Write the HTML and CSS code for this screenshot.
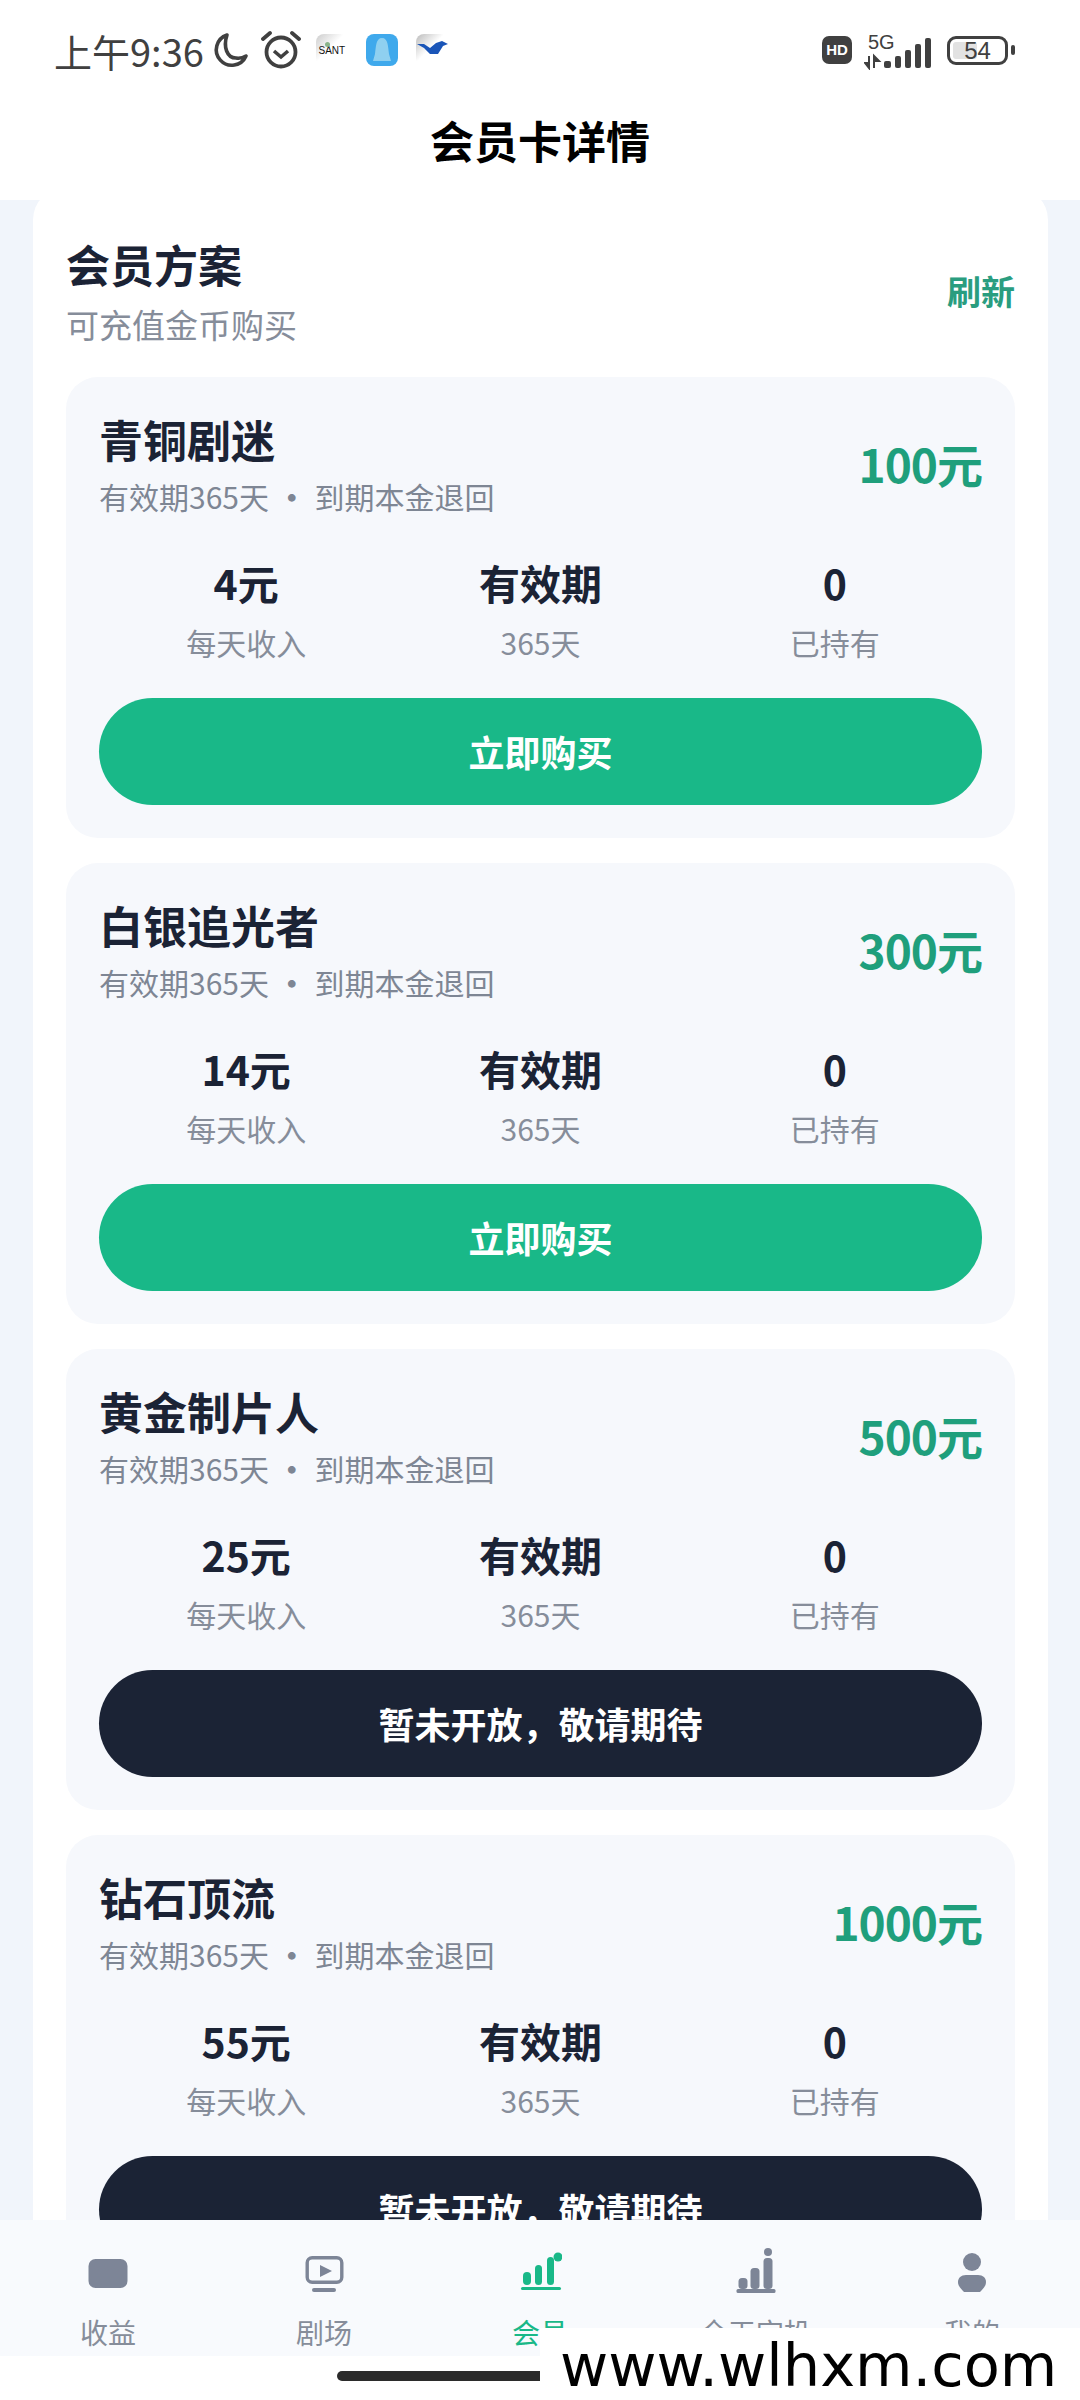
FILE: index.html
```html
<!DOCTYPE html>
<html lang="zh">
  <head>
    <meta charset="UTF-8" />
    <meta name="viewport" content="width=device-width, initial-scale=1.0" />
    <title>会员卡详情</title>
    <link rel="stylesheet" href="styles.css">
  </head>

  <body>
    <div class="page">
      <header class="top">
        <div class="status">
          <div class="status-left">
            <span class="clock">上午9:36</span>
            <svg class="ic-moon" width="38" height="38" viewBox="0 0 38 38">
              <path d="M15 4 A15.5 15.5 0 1 0 34 25 A15 15 0 0 1 24 27 C15 27 11 16 15 4 Z" fill="none" stroke="#404040" stroke-width="3.6" stroke-linejoin="round" />
            </svg>
            <svg class="ic-alarm" width="40" height="40" viewBox="0 0 40 40">
              <circle cx="20" cy="22" r="14.5" fill="none" stroke="#404040" stroke-width="3.8" />
              <path d="M13 21 L20 27 L27 21" fill="none" stroke="#404040" stroke-width="3.6" />
              <path d="M2 9 L9 3 M38 9 L31 3" stroke="#404040" stroke-width="3.8" stroke-linecap="round" />
            </svg>
            <span class="app app-sant"><i class="sant-dot"></i>SANT</span>
            <span class="app app-blue">
              <svg width="32" height="32" viewBox="0 0 32 32">
                <path d="M16 4 C10 4 10 12 9 20 L7 27 L25 27 L23 20 C22 12 22 4 16 4 Z" fill="#8fd0f0" />
              </svg>
            </span>
            <span class="app app-bird">
              <svg width="32" height="32" viewBox="0 0 32 32">
                <path d="M1 10 L8 10 L14 14 L20 9 L26 7 L32 10 L27 12 L22 20 L14 20 L8 14 Z" fill="#1a55b8" />
              </svg>
            </span>
          </div>
          <div class="status-right">
            <span class="hd">HD</span>
            <svg class="net" width="68" height="40" viewBox="0 -4 68 40">
              <text x="4" y="15" class="net-label">5G</text>
              <path d="M5 22 V34 L1 29 H5 Z M10 34 V22 L15 27 H10 Z" fill="#404040" stroke="#404040" stroke-width="2" />
              <rect x="20" y="27" width="7" height="7" rx="2" fill="#404040" />
              <rect x="31" y="22" width="6" height="12" rx="2" fill="#404040" />
              <rect x="41" y="16" width="6" height="18" rx="2" fill="#404040" />
              <rect x="51" y="10" width="6" height="24" rx="2" fill="#404040" />
              <rect x="61" y="4" width="6" height="30" rx="2" fill="#404040" />
            </svg>
            <span class="battery"><span class="battery-fill"></span><span class="battery-num">54</span></span>
            <span class="battery-tip"></span>
          </div>
        </div>
        <h1 class="title">会员卡详情</h1>
      </header>

      <main class="panel">
        <div class="panel-head">
          <div>
            <h2 class="panel-title">会员方案</h2>
            <p class="panel-sub">可充值金币购买</p>
          </div>
          <span class="refresh">刷新</span>
        </div>

        <section class="card">
          <div class="card-head">
            <div>
              <h3 class="card-name">青铜剧迷</h3>
              <p class="card-sub">有效期365天 <span class="dot">·</span> 到期本金退回</p>
            </div>
            <span class="price">100元</span>
          </div>
          <div class="stats">
            <div class="stat"><b>4元</b><span>每天收入</span></div>
            <div class="stat"><b>有效期</b><span>365天</span></div>
            <div class="stat"><b>0</b><span>已持有</span></div>
          </div>
          <div class="btn">立即购买</div>
        </section>

        <section class="card">
          <div class="card-head">
            <div>
              <h3 class="card-name">白银追光者</h3>
              <p class="card-sub">有效期365天 <span class="dot">·</span> 到期本金退回</p>
            </div>
            <span class="price">300元</span>
          </div>
          <div class="stats">
            <div class="stat"><b>14元</b><span>每天收入</span></div>
            <div class="stat"><b>有效期</b><span>365天</span></div>
            <div class="stat"><b>0</b><span>已持有</span></div>
          </div>
          <div class="btn">立即购买</div>
        </section>

        <section class="card">
          <div class="card-head">
            <div>
              <h3 class="card-name">黄金制片人</h3>
              <p class="card-sub">有效期365天 <span class="dot">·</span> 到期本金退回</p>
            </div>
            <span class="price">500元</span>
          </div>
          <div class="stats">
            <div class="stat"><b>25元</b><span>每天收入</span></div>
            <div class="stat"><b>有效期</b><span>365天</span></div>
            <div class="stat"><b>0</b><span>已持有</span></div>
          </div>
          <div class="btn btn-dark">暂未开放，敬请期待</div>
        </section>

        <section class="card">
          <div class="card-head">
            <div>
              <h3 class="card-name">钻石顶流</h3>
              <p class="card-sub">有效期365天 <span class="dot">·</span> 到期本金退回</p>
            </div>
            <span class="price">1000元</span>
          </div>
          <div class="stats">
            <div class="stat"><b>55元</b><span>每天收入</span></div>
            <div class="stat"><b>有效期</b><span>365天</span></div>
            <div class="stat"><b>0</b><span>已持有</span></div>
          </div>
          <div class="btn btn-dark">暂未开放，敬请期待</div>
        </section>
      </main>

      <nav class="tabs">
        <div class="tab">
          <svg width="44" height="50" viewBox="0 0 44 50"><rect x="2.5" y="13" width="39" height="29" rx="7" fill="#7d8597" /></svg>
          <span>收益</span>
        </div>
        <div class="tab">
          <svg width="44" height="50" viewBox="0 0 44 50">
            <rect x="5.2" y="11.7" width="34.6" height="24.6" rx="5" fill="none" stroke="#7d8597" stroke-width="3.4" />
            <path d="M18 19 L30 25 L18 31 Z" fill="#7d8597" />
            <rect x="10" y="42" width="24" height="4" rx="2" fill="#7d8597" />
          </svg>
          <span>剧场</span>
        </div>
        <div class="tab tab-on">
          <svg width="44" height="50" viewBox="0 0 44 50">
            <rect x="5" y="26" width="8" height="13" rx="4" fill="#19b888" />
            <rect x="17" y="19" width="7" height="20" rx="3.5" fill="#19b888" />
            <rect x="29" y="11" width="7" height="28" rx="3.5" fill="#19b888" />
            <circle cx="40" cy="11" r="4.5" fill="#19b888" />
            <rect x="3" y="41" width="40" height="3" rx="1.5" fill="#19b888" />
          </svg>
          <span>会员</span>
        </div>
        <div class="tab">
          <svg width="44" height="50" viewBox="0 0 44 50">
            <rect x="4.5" y="32" width="9" height="11" rx="3.5" fill="#7d8597" />
            <rect x="16.5" y="22" width="9" height="21" rx="3.5" fill="#7d8597" />
            <rect x="29.5" y="12" width="9" height="31" rx="3.5" fill="#7d8597" />
            <circle cx="34" cy="6" r="4" fill="#7d8597" />
            <rect x="2.5" y="43" width="39" height="4" rx="1.5" fill="#7d8597" />
          </svg>
          <span>全天定投</span>
        </div>
        <div class="tab">
          <svg width="44" height="50" viewBox="0 0 44 50">
            <circle cx="22" cy="16" r="9" fill="#7d8597" />
            <path d="M16 29 H28 C33 29 36 32 36 36 C36 40 33 43 30 46 H14 C11 43 8 40 8 36 C8 32 11 29 16 29 Z" fill="#7d8597" />
          </svg>
          <span>我的</span>
        </div>
      </nav>

      <div class="home-strip"><div class="home-bar"></div></div>
      <div class="watermark">www.wlhxm.com</div>
    </div>
  </body>
</html>
```

FILE: styles.css
```css
html,
body {
  margin: 0;
  padding: 0;
}

body {
  font-family: "Noto Sans CJK SC", "Noto Sans", sans-serif;
}

h1,
h2,
h3,
p {
  margin: 0;
}

.page {
  position: relative;
  width: 1080px;
  height: 2400px;
  overflow: hidden;
  background: #f1f5fb;
}

.top {
  position: relative;
  z-index: 1;
  height: 200px;
  background: #fff;
}

.status {
  display: flex;
  justify-content: space-between;
  align-items: center;
  height: 100px;
  padding: 0 65px 0 54px;
}

.status-left,
.status-right {
  display: flex;
  align-items: center;
}

.clock {
  font-size: 38px;
  color: #404040;
}

.ic-moon {
  margin-left: 8px;
}

.ic-alarm {
  margin-left: 11px;
}

.app {
  display: flex;
  align-items: center;
  justify-content: center;
  width: 32px;
  height: 32px;
  margin-left: 18px;
  border-radius: 8px;
  overflow: hidden;
}

.app-sant {
  position: relative;
  margin-left: 15px;
  background: linear-gradient(135deg, #ccc, #fff 45%);
  font-family: "Liberation Sans", sans-serif;
  font-size: 10px;
  color: #111;
}

.sant-dot {
  position: absolute;
  top: 8px;
  left: 9px;
  width: 5px;
  height: 5px;
  border-radius: 50%;
  background: #8ab48a;
}

.app-blue {
  background: #3fa9ec;
}

.app-bird {
  background: linear-gradient(135deg, #bbb, #fff 45%);
}

.hd {
  width: 30px;
  height: 28px;
  border-radius: 7px;
  background: #404040;
  color: #fff;
  font-family: "Liberation Sans", sans-serif;
  font-size: 15px;
  font-weight: 700;
  line-height: 28px;
  text-align: center;
}

.net {
  margin-left: 12px;
}

.net-label {
  font-family: "Liberation Sans", sans-serif;
  font-size: 20px;
  fill: #404040;
}

.battery {
  position: relative;
  box-sizing: border-box;
  width: 61px;
  height: 29px;
  margin-left: 15px;
  border: 3px solid #404040;
  border-radius: 9px;
  overflow: hidden;
}

.battery-fill {
  position: absolute;
  top: 3px;
  left: 3px;
  width: 24px;
  height: 17px;
  background: #e2e2e2;
  border-radius: 3px;
}

.battery-num {
  position: relative;
  display: block;
  font-family: "Liberation Sans", sans-serif;
  font-size: 24px;
  line-height: 23px;
  text-align: center;
  color: #404040;
}

.battery-tip {
  width: 4px;
  height: 10px;
  margin-left: 3px;
  border-radius: 2px;
  background: #404040;
}

.title {
  font-size: 44px;
  font-weight: 700;
  line-height: 80px;
  text-align: center;
  color: #000;
}

.panel {
  display: flex;
  flex-direction: column;
  gap: 25px;
  margin: -13px 32px 0 33px;
  padding: 0 33px;
  background: #fff;
  border-radius: 33px;
}

.panel-head {
  display: flex;
  justify-content: space-between;
  align-items: center;
  height: 124px;
  margin-top: 41px;
}

.panel-title {
  font-size: 44px;
  font-weight: 700;
  line-height: 62px;
  color: #1b2335;
}

.panel-sub {
  margin-top: 6px;
  font-size: 33px;
  line-height: 46px;
  color: #868d9a;
}

.refresh {
  font-size: 34px;
  font-weight: 700;
  color: #2a9d7f;
}

.card {
  box-sizing: border-box;
  height: 461px;
  padding: 31px 33px 0;
  background: #f6f8fc;
  border-radius: 32px;
}

.card-head {
  display: flex;
  justify-content: space-between;
  align-items: center;
}

.card-name {
  font-size: 44px;
  font-weight: 700;
  line-height: 62px;
  color: #1b2335;
}

.card-sub {
  margin-top: 4px;
  font-size: 30px;
  line-height: 44px;
  color: #7e8694;
}

.dot {
  margin: 0 1px;
  font-weight: 700;
}

.price {
  font-size: 46px;
  font-weight: 700;
  color: #1f9f7c;
  letter-spacing: -1px;
}

.stats {
  display: grid;
  grid-template-columns: repeat(3, 1fr);
  margin-top: 35px;
}

.stat {
  display: flex;
  flex-direction: column;
  align-items: center;
}

.stat b {
  font-size: 41px;
  line-height: 58px;
  color: #1b2335;
}

.stat span {
  margin-top: 9px;
  font-size: 30px;
  line-height: 44px;
  color: #868d9a;
}

.btn {
  height: 107px;
  margin-top: 34px;
  border-radius: 54px;
  background: #19b888;
  color: #fff;
  font-size: 36px;
  font-weight: 700;
  line-height: 107px;
  text-align: center;
}

.btn-dark {
  background: #1b2335;
}

.tabs {
  position: absolute;
  left: 0;
  right: 0;
  top: 2220px;
  z-index: 2;
  display: grid;
  grid-template-columns: repeat(5, 1fr);
  box-sizing: border-box;
  height: 136px;
  padding-top: 26px;
  background: #f8fafd;
}

.tab {
  display: flex;
  flex-direction: column;
  align-items: center;
  font-size: 28px;
  line-height: 40px;
  color: #868d9a;
}

.tab svg {
  margin-bottom: 16px;
}

.tab-on {
  color: #19b888;
}

.home-strip {
  position: absolute;
  left: 0;
  right: 0;
  bottom: 0;
  z-index: 2;
  box-sizing: border-box;
  height: 44px;
  padding: 15px 0 0 337px;
  background: #fff;
}

.home-bar {
  width: 406px;
  height: 10px;
  border-radius: 5px;
  background: #2b2b2b;
}

.watermark {
  position: absolute;
  right: 0;
  bottom: 0;
  z-index: 3;
  box-sizing: border-box;
  width: 540px;
  height: 72px;
  padding-left: 20px;
  overflow: hidden;
  background: #fff;
  font-family: "DejaVu Sans", sans-serif;
  font-size: 59px;
  line-height: 76px;
  color: #000;
}
```
